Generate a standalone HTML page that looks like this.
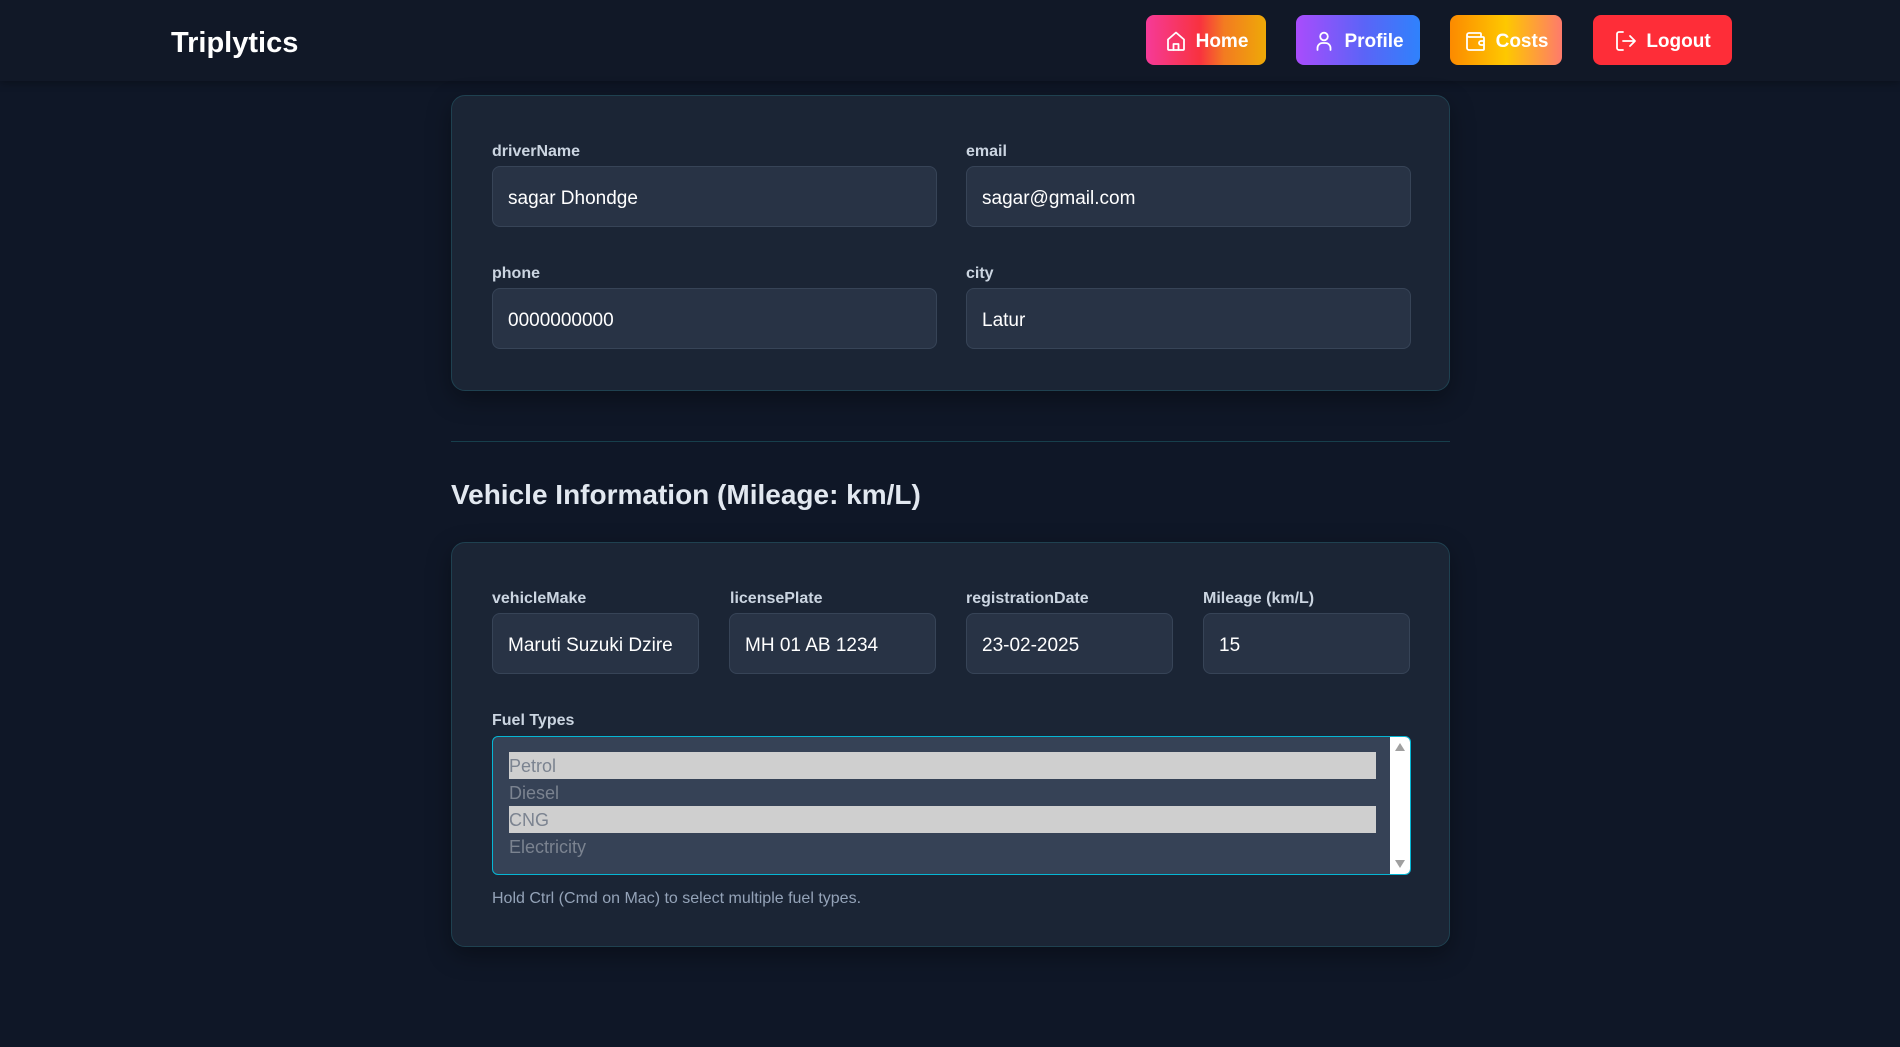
<!DOCTYPE html>
<html><head><meta charset="utf-8"><style>
*{box-sizing:border-box;margin:0;padding:0}
body{width:1900px;height:1047px;background:#0f1727;font-family:"Liberation Sans",sans-serif;color:#fff;position:relative;overflow:hidden}
.nav{position:absolute;left:0;top:0;width:1900px;height:81px;background:#111827;box-shadow:0 2px 8px rgba(0,0,0,.3)}
.logo{position:absolute;left:171px;top:27px;font-size:29px;font-weight:bold;color:#fff}
.btn{position:absolute;top:15px;height:50px;border-radius:8px;display:flex;align-items:center;justify-content:center;gap:8px;font-weight:bold;font-size:19px;color:#fff;padding-top:4px}
.btn svg{width:24px;height:24px;fill:none;stroke:#fff;stroke-width:1.8;stroke-linecap:round;stroke-linejoin:round;margin-top:-3px}
.card{position:absolute;left:451px;width:999px;background:#1b2535;border:1px solid #1f4150;border-radius:14px;box-shadow:0 8px 24px rgba(0,0,0,.35)}
.lbl{position:absolute;font-size:16px;font-weight:bold;color:#cbd5e1;margin-top:2px}
.inp{position:absolute;height:61px;background:#283345;border:1px solid #374457;border-radius:8px;font-size:19px;color:#fff;padding-left:15px;padding-top:4px;display:flex;align-items:center;white-space:nowrap;overflow:hidden}
.opt{position:absolute;left:16px;width:867px;height:27px;font-size:18px;color:#7b8390;line-height:29px}
</style></head><body>
<div class="nav">
<div class="logo">Triplytics</div>
<div class="btn" style="left:1146px;width:120px;background:linear-gradient(90deg,#f63a98,#f8323f 45%,#f37b21 65%,#eea907)"><svg viewBox="0 0 24 24"><path d="M4 10.5L12 3.5l8 7V20a1 1 0 0 1-1 1H5a1 1 0 0 1-1-1z"/><path d="M9.5 21v-6h5v6"/></svg>Home</div>
<div class="btn" style="left:1296px;width:124px;background:linear-gradient(90deg,#a94cfc,#5b64f7 55%,#2f82fc)"><svg viewBox="0 0 24 24"><circle cx="12" cy="7.5" r="3.8"/><path d="M5.5 21v-2a5 5 0 0 1 5-5h3a5 5 0 0 1 5 5v2"/></svg>Profile</div>
<div class="btn" style="left:1450px;width:112px;background:linear-gradient(90deg,#fc8a00,#fec800 50%,#fe7a6c)"><svg viewBox="0 0 24 24"><path d="M17 8V5a1 1 0 0 0-1-1H5a2 2 0 0 0 0 4h14a1 1 0 0 1 1 1v11a1 1 0 0 1-1 1H5a2 2 0 0 1-2-2V6"/><path d="M20 12h-3a2 2 0 0 0 0 4h3"/></svg>Costs</div>
<div class="btn" style="left:1593px;width:139px;background:#fe2d38"><svg viewBox="0 0 24 24"><path d="M9 21H5a2 2 0 0 1-2-2V5a2 2 0 0 1 2-2h4"/><path d="M16 17l5-5-5-5M21 12H9"/></svg>Logout</div>
</div>

<div class="card" style="top:95px;height:296px">
<div class="lbl" style="left:40px;top:45px">driverName</div>
<div class="inp" style="left:40px;top:70px;width:445px">sagar Dhondge</div>
<div class="lbl" style="left:514px;top:45px">email</div>
<div class="inp" style="left:514px;top:70px;width:445px">sagar@gmail.com</div>
<div class="lbl" style="left:40px;top:167px">phone</div>
<div class="inp" style="left:40px;top:192px;width:445px">0000000000</div>
<div class="lbl" style="left:514px;top:167px">city</div>
<div class="inp" style="left:514px;top:192px;width:445px">Latur</div>
</div>

<div style="position:absolute;left:451px;top:441px;width:999px;height:1px;background:#173f4c"></div>
<div style="position:absolute;left:451px;top:479px;font-size:28px;font-weight:bold;color:#e2e8f0">Vehicle Information (Mileage: km/L)</div>

<div class="card" style="top:542px;height:405px">
<div class="lbl" style="left:40px;top:45px">vehicleMake</div>
<div class="inp" style="left:40px;top:70px;width:207px">Maruti Suzuki Dzire</div>
<div class="lbl" style="left:278px;top:45px">licensePlate</div>
<div class="inp" style="left:277px;top:70px;width:207px">MH 01 AB 1234</div>
<div class="lbl" style="left:514px;top:45px">registrationDate</div>
<div class="inp" style="left:514px;top:70px;width:207px">23-02-2025</div>
<div class="lbl" style="left:751px;top:45px">Mileage (km/L)</div>
<div class="inp" style="left:751px;top:70px;width:207px">15</div>
<div class="lbl" style="left:40px;top:167px">Fuel Types</div>
<div style="position:absolute;left:40px;top:193px;width:919px;height:139px;background:#364256;border:1px solid #06b6d4;border-radius:6px;overflow:hidden">
<div class="opt" style="top:15px;background:#cfcfcf">Petrol</div>
<div class="opt" style="top:42px">Diesel</div>
<div class="opt" style="top:69px;background:#cfcfcf">CNG</div>
<div class="opt" style="top:96px">Electricity</div>
<div style="position:absolute;right:0;top:0;width:20px;height:139px;background:#fff"></div>
<div style="position:absolute;right:5px;top:6px;border:5px solid transparent;border-bottom:8px solid #a0a0a0;border-top:0"></div>
<div style="position:absolute;right:5px;bottom:6px;border:5px solid transparent;border-top:8px solid #a0a0a0;border-bottom:0"></div>
</div>
<div style="position:absolute;left:40px;top:347px;font-size:16px;color:#94a3b8">Hold Ctrl (Cmd on Mac) to select multiple fuel types.</div>
</div>
</body></html>
